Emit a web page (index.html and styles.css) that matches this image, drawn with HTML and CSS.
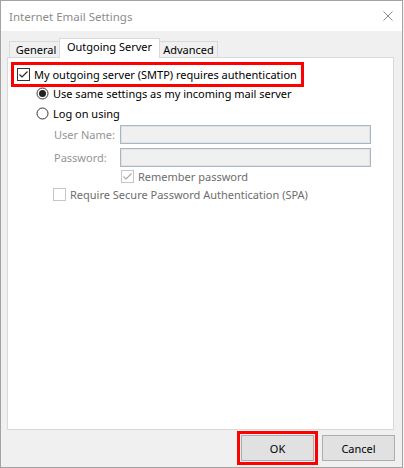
FILE: index.html
```html
<!DOCTYPE html>
<html>
<head>
<meta charset="utf-8">
<link rel="stylesheet" href="styles.css">
</head>
<body>
<div class="window">
  <div class="titlebar">
    <span class="title">Internet Email Settings</span>
    <svg class="close" width="10" height="10" viewBox="0 0 10 10"><path d="M0.5 0.5 L9.5 9.5 M9.5 0.5 L0.5 9.5" stroke="#8a8a8a" stroke-width="1" fill="none"/></svg>
  </div>
  <div class="content">
    <div class="tabs">
      <div class="tab tab-general">General</div>
      <div class="tab tab-active">Outgoing Server</div>
      <div class="tab tab-advanced">Advanced</div>
    </div>
    <div class="panel">
      <div class="redbox">
        <svg class="cb" width="13" height="13" viewBox="0 0 13 13"><rect x="0.5" y="0.5" width="12" height="12" fill="#fff" stroke="#333"/><path d="M2.5 6.5 L5 9 L10.5 3.5" stroke="#222" stroke-width="1.1" fill="none"/></svg>
        <span class="lbl">My outgoing server (SMTP) requires authentication</span>
      </div>
      <div class="opt opt1">
        <svg class="rb" width="13" height="13" viewBox="0 0 13 13"><circle cx="6.5" cy="6.5" r="5.5" fill="#fff" stroke="#333"/><circle cx="6.5" cy="6.5" r="3.5" fill="#222"/></svg>
        <span class="lbl">Use same settings as my incoming mail server</span>
      </div>
      <div class="opt opt2">
        <svg class="rb" width="13" height="13" viewBox="0 0 13 13"><circle cx="6.5" cy="6.5" r="5.5" fill="#fff" stroke="#333"/></svg>
        <span class="lbl">Log on using</span>
      </div>
      <div class="field field-user">
        <span class="flabel">User Name:</span>
        <div class="input"></div>
      </div>
      <div class="field field-pass">
        <span class="flabel">Password:</span>
        <div class="input"></div>
      </div>
      <div class="opt remember">
        <svg class="cb" width="13" height="13" viewBox="0 0 13 13"><rect x="0.5" y="0.5" width="12" height="12" fill="#fff" stroke="#c6c6c6"/><path d="M2.5 6.5 L5 9 L10.5 3.5" stroke="#a8a8a8" stroke-width="1.1" fill="none"/></svg>
        <span class="lbl dim">Remember password</span>
      </div>
      <div class="opt spa">
        <svg class="cb" width="13" height="13" viewBox="0 0 13 13"><rect x="0.5" y="0.5" width="12" height="12" fill="#fff" stroke="#c6c6c6"/></svg>
        <span class="lbl dim">Require Secure Password Authentication (SPA)</span>
      </div>
    </div>
    <div class="footer">
      <div class="okwrap"><div class="btn">OK</div></div>
      <div class="btn btn-cancel">Cancel</div>
    </div>
  </div>
</div>
</body>
</html>
```
FILE: styles.css
```css
html, body {
  margin: 0;
  padding: 0;
  background: #f3f3f3;
}
body {
  font-family: "Noto Sans", "Open Sans", sans-serif;
  font-size: 11px;
  color: #000;
}
.window {
  width: 403px;
  height: 468px;
  box-sizing: border-box;
  border: 1px solid #a3a3a3;
  background: #f0f0f0;
  display: flex;
  flex-direction: column;
}
.titlebar {
  height: 30px;
  flex: none;
  background: #fff;
  display: flex;
  align-items: center;
  justify-content: space-between;
  padding: 0 9px 0 8px;
}
.title {
  color: #8c8c8c;
  font-size: 11.5px;
  margin-top: 1px;
  white-space: nowrap;
}
.content {
  flex: 1;
  display: flex;
  flex-direction: column;
  padding: 7px 8px 0 6px;
}
.tabs {
  display: flex;
  align-items: flex-end;
  height: 19px;
  padding-left: 2px;
  position: relative;
  z-index: 1;
}
.tab {
  box-sizing: border-box;
  height: 16px;
  border-top: 1px solid #d9d9d9;
  background: #f0f0f0;
  display: flex;
  align-items: center;
  justify-content: center;
  line-height: 14px;
  white-space: nowrap;
}
.tab-general {
  width: 50px;
  border-left: 1px solid #d9d9d9;
  padding-left: 3px;
}
.tab-active {
  width: 101px;
  height: 20px;
  margin-bottom: -1px;
  background: #fff;
  border: 1px solid #d9d9d9;
  border-bottom: none;
  padding-bottom: 3px;
}
.tab-advanced {
  width: 58px;
  border-right: 1px solid #d9d9d9;
}
.panel {
  box-sizing: border-box;
  height: 373px;
  width: 387px;
  background: #fff;
  border: 1px solid #d9d9d9;
  display: flex;
  flex-direction: column;
  align-items: flex-start;
  padding: 4px 0 0 3px;
}
.redbox {
  box-sizing: border-box;
  width: 293px;
  height: 25px;
  border: 3px solid #ff0000;
  display: flex;
  align-items: center;
  padding-left: 3px;
}
.cb, .rb {
  flex: none;
  display: block;
}
.lbl {
  margin-left: 4px;
  white-space: nowrap;
}
.dim {
  color: #6d6d6d;
}
.opt {
  height: 13px;
  display: flex;
  align-items: center;
}
.opt1 {
  margin-left: 25px;
}
.opt2 {
  margin-left: 25px;
  margin-top: 7px;
}
.field {
  display: flex;
  align-items: center;
  margin-left: 43px;
}
.field-user {
  margin-top: 5px;
}
.field-pass {
  margin-top: 4px;
}
.flabel {
  width: 66px;
  color: #949494;
  white-space: nowrap;
}
.input {
  box-sizing: border-box;
  width: 251px;
  height: 19px;
  background: #f0f0f0;
  border: 1px solid #abb6c2;
  box-shadow: inset 0 0 0 1px #dfe3e8;
}
.remember {
  margin-left: 110px;
  margin-top: 3px;
}
.spa {
  margin-left: 42px;
  margin-top: 5px;
}
.footer {
  display: flex;
  justify-content: flex-end;
  align-items: center;
  margin-top: 1px;
}
.okwrap {
  border: 3px solid #ff0000;
  padding: 1px;
}
.btn {
  box-sizing: border-box;
  width: 73px;
  height: 26px;
  background: #e1e1e1;
  border: 1px solid #adadad;
  display: flex;
  align-items: center;
  justify-content: center;
}
.btn-cancel {
  margin-left: 4px;
  margin-right: -1px;
}
```
